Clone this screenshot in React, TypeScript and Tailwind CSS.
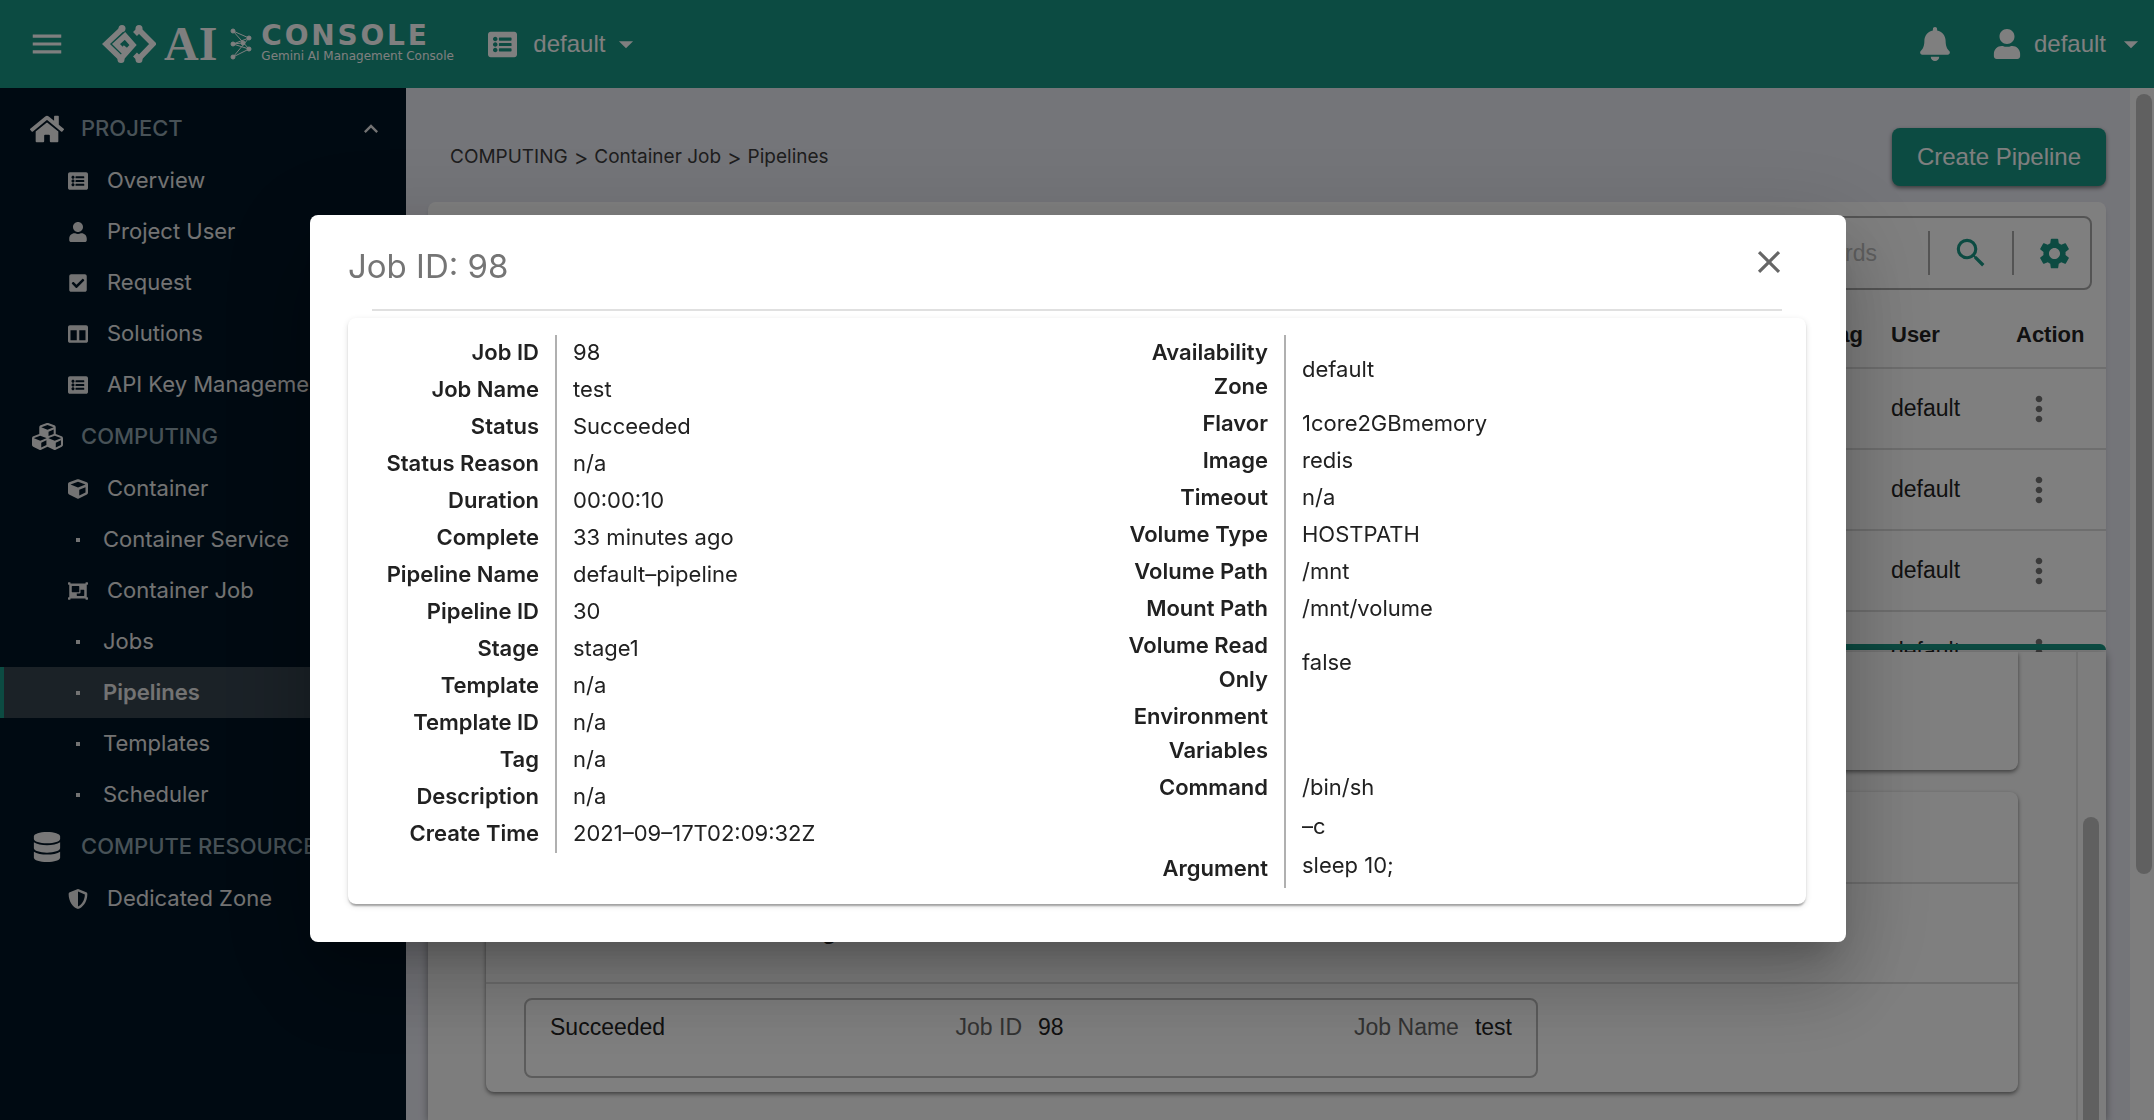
import React from 'react';
import {
  FaBell,
  FaCheckSquare,
  FaColumns,
  FaCube,
  FaCubes,
  FaDatabase,
  FaHome,
  FaListAlt,
  FaObjectGroup,
  FaShieldAlt,
  FaUser,
} from 'react-icons/fa';
import {
  MdArrowDropDown,
  MdClose,
  MdKeyboardArrowUp,
  MdMenu,
  MdMoreVert,
  MdSearch,
  MdSettings,
} from 'react-icons/md';

interface NavItem {
  label: string;
  icon?: React.ReactNode;
  active?: boolean;
}

interface NavSection {
  title: string;
  icon: React.ReactNode;
  open?: boolean;
  items: NavItem[];
}

interface Field {
  label: string;
  value: string | string[];
}

const navSections: NavSection[] = [
  {
    title: 'PROJECT',
    icon: <FaHome size={34} />,
    open: true,
    items: [
      { label: 'Overview', icon: <FaListAlt size={20} /> },
      { label: 'Project User', icon: <FaUser size={20} /> },
      { label: 'Request', icon: <FaCheckSquare size={20} /> },
      { label: 'Solutions', icon: <FaColumns size={20} /> },
      { label: 'API Key Management', icon: <FaListAlt size={20} /> },
    ],
  },
  {
    title: 'COMPUTING',
    icon: <FaCubes size={31} />,
    items: [
      { label: 'Container', icon: <FaCube size={20} /> },
      { label: 'Container Service' },
      { label: 'Container Job', icon: <FaObjectGroup size={20} /> },
      { label: 'Jobs' },
      { label: 'Pipelines', active: true },
      { label: 'Templates' },
      { label: 'Scheduler' },
    ],
  },
  {
    title: 'COMPUTE RESOURCE',
    icon: <FaDatabase size={30} />,
    items: [{ label: 'Dedicated Zone', icon: <FaShieldAlt size={20} /> }],
  },
];

const jobFields: Field[] = [
  { label: 'Job ID', value: '98' },
  { label: 'Job Name', value: 'test' },
  { label: 'Status', value: 'Succeeded' },
  { label: 'Status Reason', value: 'n/a' },
  { label: 'Duration', value: '00:00:10' },
  { label: 'Complete', value: '33 minutes ago' },
  { label: 'Pipeline Name', value: 'default–pipeline' },
  { label: 'Pipeline ID', value: '30' },
  { label: 'Stage', value: 'stage1' },
  { label: 'Template', value: 'n/a' },
  { label: 'Template ID', value: 'n/a' },
  { label: 'Tag', value: 'n/a' },
  { label: 'Description', value: 'n/a' },
  { label: 'Create Time', value: '2021–09–17T02:09:32Z' },
];

const containerFields: Field[] = [
  { label: 'Availability Zone', value: 'default' },
  { label: 'Flavor', value: '1core2GBmemory' },
  { label: 'Image', value: 'redis' },
  { label: 'Timeout', value: 'n/a' },
  { label: 'Volume Type', value: 'HOSTPATH' },
  { label: 'Volume Path', value: '/mnt' },
  { label: 'Mount Path', value: '/mnt/volume' },
  { label: 'Volume Read Only', value: 'false' },
  { label: 'Environment Variables', value: '' },
  { label: 'Command', value: '/bin/sh' },
  { label: 'Argument', value: ['–c', 'sleep 10;'] },
];

const Logo: React.FC = () => (
  <a href="#home" className="ml-9 flex items-center text-white">
    <svg width="54" height="38" viewBox="0 0 54 38" fill="none" stroke="currentColor" strokeWidth="5.5">
      <path d="M20 4 4 19l15 14.5L31 20l-8-9-9 8 7 7 3-4" />
      <path d="m33 9 4-4 14 14-14 14.500-4-4" />
      <g fill="currentColor" stroke="none">
        <circle cx="20" cy="3.500" r="3.500" />
        <circle cx="19" cy="34.500" r="3.500" />
        <circle cx="37" cy="3.500" r="3.500" />
        <circle cx="37" cy="34.500" r="3.500" />
      </g>
    </svg>
    <span className="ml-2 font-[Liberation_Serif,serif] text-[48px] leading-[38px] font-bold">AI</span>
    <svg className="ml-3" width="24" height="34" viewBox="0 0 24 34" fill="currentColor" stroke="currentColor">
      <path d="M4 4 20 11M4 4l16 18M4 17l16-6M4 17l16 5M4 30l16-8M4 30l16-19M4 17l9-1" fill="none" strokeWidth="1" />
      <circle cx="4" cy="4" r="2" />
      <circle cx="4" cy="17" r="2" />
      <circle cx="4" cy="30" r="2" />
      <circle cx="14" cy="16" r="2" />
      <circle cx="20" cy="11" r="2" />
      <circle cx="20" cy="22" r="2" />
    </svg>
    <span className="ml-2 flex w-[190px] flex-col whitespace-nowrap font-[DejaVu_Sans,sans-serif]">
      <span className="text-[28px] leading-[24px] font-bold tracking-widest">CONSOLE</span>
      <span className="text-[12px] leading-4">Gemini AI Management Console</span>
    </span>
  </a>
);

const Header: React.FC = () => (
  <header className="flex h-[88px] shrink-0 items-center bg-[#189684] px-[28px] font-[Liberation_Sans,Arial,sans-serif] text-[24px] text-white">
    <button type="button" aria-label="Toggle menu">
      <MdMenu size={38} />
    </button>
    <Logo />
    <button type="button" className="ml-[37px] flex items-center">
      <FaListAlt size={29} />
      <span className="ml-4">default</span>
      <MdArrowDropDown className="ml-1" size={34} />
    </button>
    <button type="button" aria-label="Notifications" className="ml-auto">
      <FaBell size={34} />
    </button>
    <button type="button" className="-mr-[22px] ml-10 flex items-center">
      <FaUser size={30} />
      <span className="ml-3">default</span>
      <MdArrowDropDown className="ml-2" size={34} />
    </button>
  </header>
);

const Sidebar: React.FC = () => (
  <nav className="w-[406px] shrink-0 overflow-hidden bg-[#001424] pt-[14px] text-[22px] whitespace-nowrap text-[#e6e6e6]">
    {navSections.map(section => (
      <section key={section.title}>
        <h2 className="flex h-[53px] items-center font-medium text-[#90a4ae]">
          <span className="ml-[30px] flex w-[34px] justify-center text-[#f0f0f0]">{section.icon}</span>
          <span className="ml-[17px]">{section.title}</span>
          {section.open && <MdKeyboardArrowUp className="mr-[21px] ml-auto text-[#e6e6e6]" size={28} />}
        </h2>
        <ul>
          {section.items.map(item => (
            <li key={item.label}>
              <a
                href="#"
                className={`flex h-[51px] items-center border-l-4 ${
                  item.active ? 'border-[#189684] bg-[#36444f] font-semibold' : 'border-transparent'
                }`}
              >
                <span className="ml-[64px] flex w-5 justify-center">
                  {item.icon ?? <span className="size-1 bg-current" />}
                </span>
                <span className={item.icon ? 'ml-[19px]' : 'ml-[15px]'}>{item.label}</span>
              </a>
            </li>
          ))}
        </ul>
      </section>
    ))}
  </nav>
);

const PipelineTable: React.FC = () => (
  <div className="mt-4 min-h-0 flex-1 overflow-hidden rounded-t-lg bg-white pt-[14px] font-[Liberation_Sans,Arial,sans-serif] text-[23px] text-[#222] shadow-md">
    <div className="mx-[14px] mb-2 flex h-[74px] items-center rounded-lg border-2 border-[#a8a8a8]">
      <input
        type="text"
        aria-label="Keywords"
        placeholder="Keywords"
        className="h-full min-w-0 flex-1 pr-[51px] text-right placeholder:text-[#bdbdbd]"
      />
      <button type="button" aria-label="Search" className="flex h-11 w-[84px] items-center justify-center border-l-2 border-[#a8a8a8] text-[#189684]">
        <MdSearch size={38} />
      </button>
      <button type="button" aria-label="Settings" className="flex h-11 w-[78px] items-center justify-center border-l-2 border-[#a8a8a8] pl-1 text-[#189684]">
        <MdSettings size={37} />
      </button>
    </div>
    <table className="w-full table-fixed border-collapse">
      <thead>
        <tr className="h-[70px] border-b-2 border-[#dcdcdc] text-left text-[22px]">
          <th className="pt-1 pr-3 text-right">Tag</th>
          <th className="w-[125px] pt-1 pl-4">User</th>
          <th className="w-[106px] pt-1 pl-4">Action</th>
        </tr>
      </thead>
      <tbody>
        {[1, 2, 3, 4].map(row => (
          <tr key={row} className="h-[81px] border-b-2 border-[#dcdcdc]">
            <td />
            <td className="pl-4">default</td>
            <td className="pl-4">
              <button type="button" aria-label="Actions" className="flex w-[46px] justify-center text-[#757575]">
                <MdMoreVert size={40} />
              </button>
            </td>
          </tr>
        ))}
      </tbody>
    </table>
  </div>
);

const StagePanel: React.FC = () => (
  <div className="relative -mt-2 h-[476px] shrink-0 font-[Liberation_Sans,Arial,sans-serif] text-[23px] text-[#222]">
    <div className="mb-[2px] h-[6px] rounded-t-lg bg-[#189684]" />
    <div className="flex h-[468px] overflow-hidden bg-[#fafafa] shadow-[0_2px_8px_rgba(0,0,0,0.4)]">
      <div className="flex-1 pr-[58px] pl-[58px]">
        <div className="h-[118px] rounded-b-lg bg-white shadow-[0_2px_4px_rgba(0,0,0,0.5)]" />
        <div className="mt-[22px] rounded-lg bg-white shadow-[0_2px_4px_rgba(0,0,0,0.5)]">
          <div className="h-[92px] border-b-2 border-[#dcdcdc]" />
          <div className="flex h-[100px] items-center border-b-2 border-[#dcdcdc] pb-1 pl-[303px] font-bold">stage1</div>
          <div className="px-[38px] pt-[14px] pb-[14px]">
            <div className="flex h-[80px] w-[1014px] justify-between rounded-lg border-2 border-[#b8b8b8] px-6 pt-[10px]">
              <span>Succeeded</span>
              <span className="flex gap-4">
                <span className="text-[#666]">Job ID</span>98
              </span>
              <span className="flex gap-4">
                <span className="text-[#666]">Job Name</span>test
              </span>
            </div>
          </div>
        </div>
      </div>
      <div className="mr-[2px] w-[28px] border-l-2 border-[#e4e4e4] pt-[165px] pl-[5px]">
        <div className="h-full w-4 rounded-t-full bg-[#c1c1c1]" />
      </div>
    </div>
  </div>
);

const FieldList: React.FC<{ fields: Field[] }> = ({ fields }) => (
  <dl className="text-[22px] leading-[34px] text-[#212121]">
    {fields.map(({ label, value }) => (
      <div key={label} className="flex">
        <dt className={`flex w-[207px] justify-end pr-4 pb-[3px] pl-7 text-right font-semibold ${Array.isArray(value) ? 'items-end' : ''}`}>
          {label}
        </dt>
        <dd className="flex flex-1 flex-col justify-center border-l-2 border-[#b0b0b0] pb-[3px] pl-4">
          {Array.isArray(value)
            ? value.map(line => <span key={line} className="leading-[39px]">{line}</span>)
            : value}
        </dd>
      </div>
    ))}
  </dl>
);

const JobDialog: React.FC = () => (
  <div className="fixed inset-0 flex items-center justify-center bg-black/50 pt-9 pl-0.5">
    <div
      role="dialog"
      aria-labelledby="job-title"
      className="w-[1536px] max-w-[90%] rounded-lg bg-white pr-10 pb-[38px] pl-[38px] shadow-[0_22px_30px_-14px_rgba(0,0,0,0.2),0_48px_76px_6px_rgba(0,0,0,0.14),0_18px_92px_16px_rgba(0,0,0,0.12)]"
    >
      <div className="flex h-[94px] items-center justify-between">
        <h1 id="job-title" className="pt-2 text-[33px] leading-10 text-[#757575]">Job ID: 98</h1>
        <button type="button" aria-label="Close" className="mr-[18px] text-[#666]">
          <MdClose size={38} />
        </button>
      </div>
      <hr className="mx-6 border-t-2 border-[#e0e0e0]" />
      <div className="mt-[7px] grid grid-cols-2 rounded-lg pt-[17px] pb-4 shadow-[0_4px_2px_-2px_rgba(0,0,0,0.2),0_2px_2px_rgba(0,0,0,0.14),0_2px_6px_rgba(0,0,0,0.12)]">
        <FieldList fields={jobFields} />
        <FieldList fields={containerFields} />
      </div>
    </div>
  </div>
);

export default function App() {
  return (
    <div className="flex h-screen flex-col overflow-hidden bg-[#e9eaf3] font-[Inter,sans-serif]">
      <Header />
      <div className="flex min-h-0 flex-1">
        <Sidebar />
        <main className="flex min-w-0 flex-1 flex-col pt-10 pr-6 pl-[22px]">
          <div className="flex items-center justify-between pl-[22px]">
            <nav aria-label="Breadcrumb" className="flex items-center gap-1.5 text-[19px] text-[#3c3c3c]">
              <a href="#">COMPUTING</a>
              <span className="text-[22px]">&gt;</span>
              <a href="#">Container Job</a>
              <span className="text-[22px]">&gt;</span>
              <a href="#">Pipelines</a>
            </nav>
            <button
              type="button"
              className="h-[58px] w-[214px] rounded-lg bg-[#189684] font-[Liberation_Sans,Arial,sans-serif] text-[24px] text-white shadow-[0_2px_4px_rgba(0,0,0,0.5)]"
            >
              Create Pipeline
            </button>
          </div>
          <PipelineTable />
          <StagePanel />
        </main>
        {/* Page scrollbar */}
        <div className="w-6 shrink-0 bg-[#fafafa] px-[6px] pt-[6px]">
          <div className="h-[76%] w-4 rounded-full bg-[#c1c1c1]" />
        </div>
      </div>
      <JobDialog />
    </div>
  );
}
